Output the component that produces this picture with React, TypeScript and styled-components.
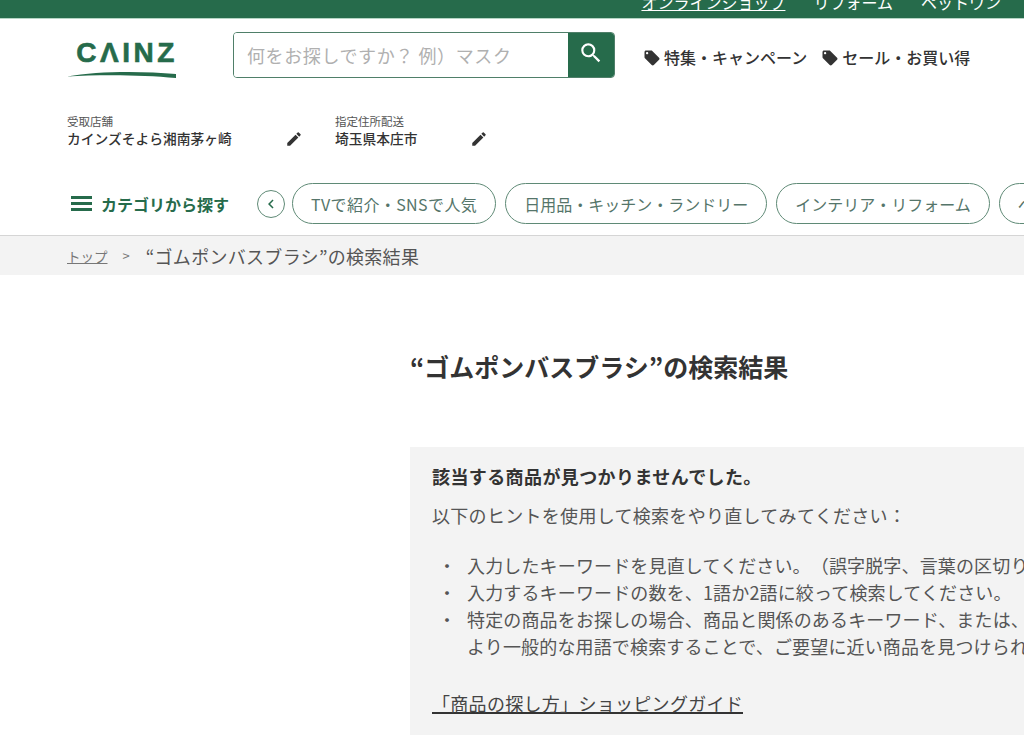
import React from 'react'
import styled, { createGlobalStyle } from 'styled-components'
import { MdSearch, MdEdit, MdLocalOffer, MdChevronLeft } from 'react-icons/md'

const GREEN = '#266b4b'
const JP = `"Noto Sans CJK JP", "Liberation Sans", sans-serif`

const Global = createGlobalStyle`
  html, body {
    margin: 0;
    padding: 0;
    height: 100%;
    overflow: hidden;
    background: #fff;
  }
  body {
    font-family: ${JP};
    color: #333;
    text-spacing-trim: space-all;
  }
`

const Page = styled.div`
  width: 1024px;
  height: 755px;
  overflow: hidden;
`

const TopBar = styled.nav`
  height: 18px;
  background: ${GREEN};
  border-bottom: 1px solid #b5d5c5;
  display: flex;
  justify-content: flex-end;
  align-items: flex-end;
  gap: 28px;
  padding-right: 23px;
  overflow: hidden;
`

const TopLink = styled.a<{ $active?: boolean }>`
  color: #fff;
  font-size: 16px;
  line-height: 24px;
  margin-bottom: 4px;
  white-space: nowrap;
  text-decoration: ${p => (p.$active ? 'underline' : 'none')};
`

const Header = styled.header`
  display: flex;
  align-items: center;
  height: 78px;
  padding-left: 67px;
`

const Logo = styled.svg`
  width: 110px;
  height: 40px;
  margin-right: 56px;
  flex: none;
`

const SearchBox = styled.form`
  display: flex;
  width: 382px;
  height: 46px;
  box-sizing: border-box;
  border: 1px solid #4f7f69;
  border-radius: 4px;
  overflow: hidden;
  margin-top: -6px;
  flex: none;
`

const SearchInput = styled.input`
  flex: 1;
  min-width: 0;
  border: none;
  outline: none;
  padding: 0 13px;
  font: 18px ${JP};
  letter-spacing: 0.6px;
  &::placeholder {
    color: #b0b0b0;
  }
`

const SearchButton = styled.button`
  width: 46px;
  border: none;
  padding: 0 0 4px;
  background: ${GREEN};
  color: #fff;
  display: flex;
  align-items: center;
  justify-content: center;
`

const Promos = styled.div`
  display: flex;
  gap: 14px;
  margin-left: 28px;
  margin-top: -3px;
`

const Promo = styled.a`
  display: flex;
  align-items: center;
  gap: 3px;
  font-size: 16px;
  font-weight: 500;
  color: #333;
  white-space: nowrap;

  svg {
    transform: translateY(1px);
  }
`

const Delivery = styled.div`
  display: flex;
  padding: 17px 0 0 67px;
  height: 69px;
`

const DeliveryItem = styled.div<{ $width: number }>`
  width: ${p => p.$width}px;
  position: relative;
`

const DeliveryLabel = styled.div`
  font-size: 11.5px;
  line-height: 14px;
  color: #555;
`

const DeliveryName = styled.div`
  font-size: 13.75px;
  line-height: 20px;
  font-weight: 500;
  color: #333;
`

const EditIcon = styled.span`
  position: absolute;
  right: 32px;
  top: 16px;
  display: flex;
  color: #333;
`

const CategoryBar = styled.div`
  display: flex;
  align-items: center;
  height: 41px;
  padding-left: 71px;
  white-space: nowrap;
`

const MenuButton = styled.a`
  display: flex;
  align-items: center;
  gap: 9px;
  font-size: 16px;
  font-weight: 700;
  color: ${GREEN};
  width: 186px;
  flex: none;
`

const MenuLines = styled.span`
  width: 21px;
  height: 15px;
  border-top: 3px solid ${GREEN};
  border-bottom: 3px solid ${GREEN};
  box-sizing: border-box;
  position: relative;
  &::after {
    content: '';
    position: absolute;
    left: 0;
    right: 0;
    top: 3px;
    height: 3px;
    background: ${GREEN};
  }
`

const RoundButton = styled.button`
  width: 28px;
  height: 28px;
  margin-right: 7px;
  padding: 0;
  border: 1px solid #5f8a76;
  border-radius: 50%;
  background: #fff;
  color: ${GREEN};
  display: flex;
  align-items: center;
  justify-content: center;
  flex: none;
`

const Pills = styled.div`
  display: flex;
  gap: 9px;
`

const Pill = styled.a<{ $spread?: boolean }>`
  display: flex;
  align-items: center;
  justify-content: center;
  height: 41px;
  box-sizing: border-box;
  padding: 0 18px;
  border: 1px solid #5f8a76;
  border-radius: 21px;
  font-size: 16px;
  color: #55756a;
  letter-spacing: ${p => (p.$spread ? '0.4px' : '0')};
  flex: none;
`

const Crumbs = styled.div`
  display: flex;
  align-items: center;
  height: 39px;
  margin-top: 11px;
  padding-left: 67px;
  background: #f3f3f3;
  border-top: 1px solid #d5d5d5;
`

const CrumbLink = styled.a`
  font-size: 13.5px;
  color: #777;
  text-decoration: underline;
`

const CrumbSep = styled.span`
  font-size: 13px;
  color: #777;
  margin: 0 16px 0 15px;
`

const CrumbCurrent = styled.span`
  font-size: 18px;
  letter-spacing: 0.3px;
  color: #555;
`

const Main = styled.main`
  padding: 73px 0 0 410px;
`

const Title = styled.h1`
  margin: 0;
  font-size: 25px;
  line-height: 36px;
  font-weight: 700;
  color: #333;
`

const Panel = styled.section`
  margin-top: 63px;
  width: 760px;
  background: #f3f3f3;
  padding: 13px 22px 21px;
  box-sizing: border-box;
`

const Lead = styled.p`
  margin: 0;
  font-size: 18px;
  line-height: 32px;
  font-weight: 700;
  letter-spacing: 0.4px;
  color: #333;
`

const Hint = styled.p`
  margin: 8px 0 22px;
  font-size: 18px;
  line-height: 30px;
  letter-spacing: 0.3px;
  color: #555;
`

const Tips = styled.ul`
  margin: 0 0 34px;
  padding: 0;
  list-style: none;
`

const Tip = styled.li`
  position: relative;
  padding-left: 35px;
  font-size: 18px;
  line-height: 27px;
  letter-spacing: 0.15px;
  color: #555;
  white-space: nowrap;
  &::before {
    content: '・';
    position: absolute;
    left: 6px;
  }
`

const Guide = styled.a`
  display: block;
  width: fit-content;
  font-size: 18px;
  line-height: 18px;
  letter-spacing: 0.3px;
  color: #444;
  border-bottom: 2px solid #333;
`

const pills = ['TVで紹介・SNSで人気', '日用品・キッチン・ランドリー', 'インテリア・リフォーム', 'ペット・ガーデニング']
const query = '“ゴムポンバスブラシ”の検索結果'

export default function App() {
  return (
    <Page>
      <Global />
      <TopBar>
        <TopLink $active>オンラインショップ</TopLink>
        <TopLink>リフォーム</TopLink>
        <TopLink>ペットワン</TopLink>
      </TopBar>
      <Header>
        <Logo viewBox="0 0 110 40">
          <text x="60" y="24" textAnchor="middle" fontFamily="Liberation Sans, sans-serif" fontWeight="700" fontSize="28" letterSpacing="3.5" fill={GREEN} stroke={GREEN} strokeWidth="0.6">CΛINZ</text>
          <path d="M0 38.5 C30 33 75 33 109 36 L109 40 C75 36.5 30 36.5 0 38.5 Z" fill={GREEN} />
        </Logo>
        <SearchBox>
          <SearchInput placeholder="何をお探しですか？ 例）マスク" />
          <SearchButton type="button"><MdSearch size={26} /></SearchButton>
        </SearchBox>
        <Promos>
          <Promo><MdLocalOffer size={18} color="#333" />特集・キャンペーン</Promo>
          <Promo><MdLocalOffer size={18} color="#333" />セール・お買い得</Promo>
        </Promos>
      </Header>
      <Delivery>
        <DeliveryItem $width={268}>
          <DeliveryLabel>受取店舗</DeliveryLabel>
          <DeliveryName>カインズそよら湘南茅ヶ崎</DeliveryName>
          <EditIcon><MdEdit size={18} /></EditIcon>
        </DeliveryItem>
        <DeliveryItem $width={185}>
          <DeliveryLabel>指定住所配送</DeliveryLabel>
          <DeliveryName>埼玉県本庄市</DeliveryName>
          <EditIcon><MdEdit size={18} /></EditIcon>
        </DeliveryItem>
      </Delivery>
      <CategoryBar>
        <MenuButton><MenuLines />カテゴリから探す</MenuButton>
        <RoundButton type="button"><MdChevronLeft size={18} /></RoundButton>
        <Pills>
          {pills.map((p, i) => <Pill key={p} $spread={i === 0}>{p}</Pill>)}
        </Pills>
      </CategoryBar>
      <Crumbs>
        <CrumbLink>トップ</CrumbLink>
        <CrumbSep>&gt;</CrumbSep>
        <CrumbCurrent>{query}</CrumbCurrent>
      </Crumbs>
      <Main>
        <Title>{query}</Title>
        <Panel>
          <Lead>該当する商品が見つかりませんでした。</Lead>
          <Hint>以下のヒントを使用して検索をやり直してみてください：</Hint>
          <Tips>
            <Tip>入力したキーワードを見直してください。（誤字脱字、言葉の区切りなど）</Tip>
            <Tip>入力するキーワードの数を、1語か2語に絞って検索してください。</Tip>
            <Tip>特定の商品をお探しの場合、商品と関係のあるキーワード、または、<br />より一般的な用語で検索することで、ご要望に近い商品を見つけられる場合があります。</Tip>
          </Tips>
          <Guide>「商品の探し方」ショッピングガイド</Guide>
        </Panel>
      </Main>
    </Page>
  )
}
